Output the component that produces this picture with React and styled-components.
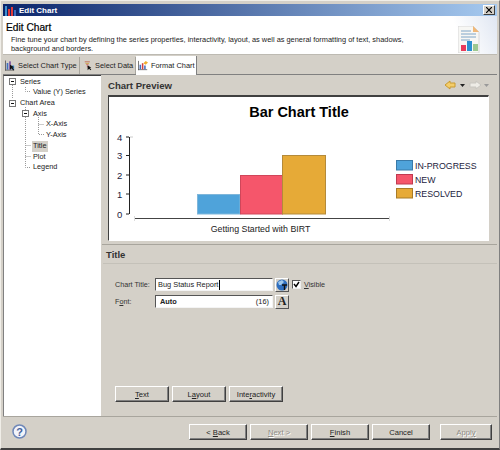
import React from "react";
import styled, { createGlobalStyle } from "styled-components";

const GlobalStyle = createGlobalStyle`
  html, body { margin: 0; padding: 0; background: #d4d0c8; }
  body { font-family: "Liberation Sans", Arial, sans-serif; font-size: 8px; color: #222; }
`;

const Win = styled.div`
  width: 500px;
  height: 450px;
  box-sizing: border-box;
  background: #d4d0c8;
  border-bottom: 2px solid #404040;
  border-right: 1px solid #808080;
  border-top: 1px solid #f0eee8;
  border-left: 1px solid #f0eee8;
  padding: 3px 2px 1px 2px;
  display: flex;
  flex-direction: column;
  overflow: hidden;
`;

const TitleBar = styled.div`
  height: 12px;
  flex: none;
  display: flex;
  align-items: center;
  gap: 3px;
  padding: 0 2px 0 2px;
  color: #fff;
  font-size: 8px;
  font-weight: bold;
  background: linear-gradient(90deg, #0a246a, #a6caf0);
  svg { flex: none; }
`;

const CloseBox = styled.div`
  margin-left: auto;
  width: 12px;
  height: 10px;
  background: #d4d0c8;
  border: 1px solid;
  border-color: #fff #404040 #404040 #fff;
  box-sizing: border-box;
  display: flex;
  align-items: center;
  justify-content: center;
`;

const Banner = styled.div`
  height: 39px;
  flex: none;
  box-sizing: border-box;
  position: relative;
  padding: 5px 3px 0;
  background: linear-gradient(245deg, #dfe6f2 0, #fff 42px);
  border-bottom: 1px solid #bdbab2;
  background-color: #fff;
`;

const BannerTitle = styled.div`
  font-size: 10.2px;
  line-height: 14px;
  color: #000;
  -webkit-text-stroke: 0.2px #000;
`;

const BannerText = styled.div`
  font-size: 7.4px;
  line-height: 9px;
  padding-left: 5px;
  color: #222;
  white-space: nowrap;
`;

const BannerIcon = styled.svg`
  position: absolute;
  right: 17px;
  top: 10px;
`;

const TabBar = styled.div`
  height: 19px;
  flex: none;
  display: flex;
  align-items: flex-end;
  box-sizing: border-box;
  border-bottom: 1px solid #808080;
  margin-top: 1px;
`;

const Tab = styled.div`
  height: ${(p) => (p.$active ? 19 : 17)}px;
  width: ${(p) => p.$w}px;
  flex: none;
  box-sizing: border-box;
  display: flex;
  align-items: center;
  gap: 3px;
  padding-left: ${(p) => p.$pad}px;
  font-size: 7.4px;
  white-space: nowrap;
  background: ${(p) => (p.$active ? "#fff" : "transparent")};
  border-right: 1px solid ${(p) => (p.$active ? "#808080" : "#a8a59d")};
  margin-bottom: ${(p) => (p.$active ? "-1px" : "0")};
  position: relative;
  svg { flex: none; }
`;

const Body = styled.div`
  flex: 1;
  min-height: 0;
  display: flex;
`;

const TreePanel = styled.div`
  width: 98px;
  flex: none;
  position: relative;
  box-sizing: border-box;
  background: #fff;
  border-top: 1px solid #404040;
  border-left: 1px solid #808080;
  padding-top: 0.5px;
`;

const TreeGuides = styled.svg`
  position: absolute;
  left: 0;
  top: 0;
`;

const TreeRow = styled.div`
  height: 10.72px;
  line-height: 10.72px;
  font-size: 7.3px;
  padding-left: ${(p) => 15 + p.$level * 13}px;
  position: relative;
  white-space: nowrap;
`;

const TreeLabel = styled.span`
  background: ${(p) => (p.$selected ? "#d4d0c8" : "transparent")};
  padding: 0 1px;
  display: inline-block;
`;

const Main = styled.div`
  flex: 1;
  min-width: 0;
  display: flex;
  flex-direction: column;
`;

const PreviewHead = styled.div`
  height: 20px;
  flex: none;
  display: flex;
  align-items: center;
  padding: 0 8px 0 7px;
  box-sizing: border-box;
  font-size: 9.6px;
  font-weight: bold;
  color: #333;
`;

const NavIcons = styled.svg`
  margin-left: auto;
`;

const ChartBox = styled.div`
  height: 146px;
  flex: none;
  margin: 0 8px 0 7px;
  box-sizing: border-box;
  background: #fff;
  border: 1px solid;
  border-color: #404040 #fff #fff #404040;
  border-top-width: 2px;
`;

const ChartSvg = styled.svg`
  display: block;
`;

const Sash = styled.div`
  height: 3px;
  flex: none;
  margin-left: 1px;
  border-bottom: 1px solid #a8a59d;
`;

const SectionHead = styled.div`
  height: 19px;
  flex: none;
  box-sizing: border-box;
  padding: 4px 0 0 3px;
  margin-left: 2px;
  font-size: 9.5px;
  font-weight: bold;
  color: #333;
  border-bottom: 1px solid #c4c1b9;
`;

const Form = styled.div`
  padding: 14px 0 0 14px;
  display: grid;
  grid-template-columns: 40px 118px 15px auto;
  grid-auto-rows: 13px;
  row-gap: 4px;
  align-items: center;
  font-size: 7.2px;
`;

const FieldLabel = styled.div`
  color: #333;
  white-space: nowrap;
`;

const Field = styled.div`
  height: 13px;
  box-sizing: border-box;
  background: #fff;
  border: 1px solid;
  border-color: #555 #f4f4f4 #f4f4f4 #555;
  padding: 0 3px 0 2px;
  display: flex;
  align-items: center;
  justify-content: space-between;
  font-size: 7.4px;
  white-space: nowrap;
`;

const Caret = styled.span`
  display: inline-block;
  width: 1px;
  height: 10px;
  background: #000;
  margin-left: 1px;
`;

const FieldText = styled.span`
  font-weight: ${(p) => (p.$bold ? "bold" : "normal")};
  padding-left: ${(p) => (p.$bold ? 2 : 0)}px;
  display: flex;
  align-items: center;
`;

const IconButton = styled.div`
  width: 14px;
  height: 14px;
  margin-left: 2px;
  box-sizing: border-box;
  background: #d4d0c8;
  border: 1px solid;
  border-color: #fff #555 #555 #fff;
  display: flex;
  align-items: center;
  justify-content: center;
  font-family: "Liberation Serif", serif;
  font-weight: bold;
  font-size: 12px;
`;

const CheckRow = styled.div`
  display: flex;
  align-items: center;
  gap: 3px;
  padding-left: 4px;
  color: #333;
`;

const CheckBox = styled.span`
  width: 9px;
  height: 9px;
  box-sizing: border-box;
  background: #fff;
  border: 1px solid;
  border-color: #555 #eee #eee #555;
  display: inline-flex;
`;

const Spacer = styled.div`
  flex: 1;
`;

const ActionRow = styled.div`
  display: flex;
  gap: 3px;
  padding-left: 14px;
  margin-bottom: 14px;
`;

const Button = styled.div`
  width: ${(p) => p.$w}px;
  height: 16px;
  margin-left: ${(p) => p.$gap || 0}px;
  flex: none;
  box-sizing: border-box;
  background: #d4d0c8;
  border: 1px solid;
  border-color: #fff #404040 #404040 #fff;
  box-shadow: inset -1px -1px 0 #808080;
  display: flex;
  align-items: center;
  justify-content: center;
  font-size: 7.6px;
  color: ${(p) => (p.$off ? "#8f8c85" : "#222")};
  text-shadow: ${(p) => (p.$off ? "1px 1px 0 #fff" : "none")};
  white-space: pre;
`;

const Footer = styled.div`
  height: 31px;
  flex: none;
  box-sizing: border-box;
  border-top: 1px solid #a8a59d;
  padding: 7px 6px 0 9px;
  display: flex;
  align-items: flex-start;
  gap: 3px;
`;

const Help = styled.svg`
  margin-right: 159px;
  flex: none;
`;

const treeItems = [
  { label: "Series", level: 0 },
  { label: "Value (Y) Series", level: 1 },
  { label: "Chart Area", level: 0 },
  { label: "Axis", level: 1 },
  { label: "X-Axis", level: 2 },
  { label: "Y-Axis", level: 2 },
  { label: "Title", level: 1, selected: true },
  { label: "Plot", level: 1 },
  { label: "Legend", level: 1 },
];

const ChartIcon = () => (
  <svg width="11" height="11" viewBox="0 0 11 11">
    <rect x="0" y="1" width="2" height="10" fill="#3f8fd0" />
    <rect x="3" y="4" width="2" height="7" fill="#e23a3a" />
    <rect x="6" y="2" width="2" height="9" fill="#e23a3a" />
    <rect x="9" y="5" width="2" height="6" fill="#3f6fc0" />
  </svg>
);

const TypeIcon = () => (
  <svg width="10" height="11" viewBox="0 0 12 12">
    <rect x="0" y="0" width="1" height="12" fill="#555" />
    <rect x="0" y="11" width="11" height="1" fill="#555" />
    <rect x="2" y="3" width="2" height="8" fill="#3f6fc0" />
    <rect x="5" y="1" width="2" height="10" fill="#7a4fa0" />
    <rect x="8" y="6" width="3" height="5" fill="#3f8fd0" />
    <path d="M6 5 L6 11 L8 9.5 L10 12 L11 11 L9 8.5 L11 8 Z" fill="#111" />
  </svg>
);

const DataIcon = () => (
  <svg width="8" height="11" viewBox="0 0 11 13">
    <rect x="1" y="1" width="7" height="1" fill="#c05030" />
    <rect x="2" y="3" width="5" height="1" fill="#c8a030" />
    <rect x="3" y="5" width="3" height="1" fill="#d04040" />
    <rect x="4" y="7" width="1" height="2" fill="#d04040" />
    <path d="M5 6 L5 13 L7 11 L9 13 L10 12 L8 10 L10 9.5 Z" fill="#111" />
  </svg>
);

const FormatIcon = () => (
  <svg width="10" height="11" viewBox="0 0 13 12">
    <rect x="0" y="0" width="1" height="12" fill="#555" />
    <rect x="0" y="11" width="12" height="1" fill="#555" />
    <rect x="2" y="5" width="2" height="6" fill="#3f6fc0" />
    <rect x="5" y="3" width="2" height="8" fill="#d04040" />
    <rect x="8" y="6" width="2" height="5" fill="#3f6fc0" />
    <path d="M7 3 L10 0 L13 2 L10 5 Z" fill="#f0b030" />
  </svg>
);

const TreeBox = ({ x, y }) => (
  <g>
    <rect x={x + 0.5} y={y + 0.5} width="6" height="6" fill="#fff" stroke="#777" />
    <path d={`M${x + 2} ${y + 3.5} H${x + 5}`} stroke="#111" />
  </g>
);

const TreeDrawing = () => (
  <TreeGuides width="60" height="110">
    <g stroke="#999" strokeDasharray="1 1" fill="none">
      <path d="M8.5 9 V23" />
      <path d="M21.5 11 V15.5 H27" />
      <path d="M21.5 31 V91.5 H27" />
      <path d="M21.5 69.5 H27 M21.5 80.5 H27" />
      <path d="M34.5 41 V58.5 H40 M34.5 48.5 H40" />
    </g>
    <TreeBox x={5} y={2} />
    <TreeBox x={5} y={24} />
    <TreeBox x={18} y={34} />
  </TreeGuides>
);

const Chart = () => (
  <ChartSvg width="379" height="143" viewBox="109 97 379 143">
    <text x="299" y="117" textAnchor="middle" fontSize="14.5" fontWeight="bold" fill="#000" fontFamily="Liberation Sans">
      Bar Chart Title
    </text>
    <g fontSize="9.5" fill="#1c1c40" fontFamily="Liberation Sans">
      <text x="117" y="141">4</text>
      <text x="117" y="159">3</text>
      <text x="117" y="179">2</text>
      <text x="117" y="198">1</text>
      <text x="117" y="218">0</text>
    </g>
    <path d="M129.5 137 V214 M126 137 H129 M126 155.5 H129 M126 175 H129 M126 194 H129 M126 214 H129" stroke="#222" fill="none" />
    <path d="M130 137 H133" stroke="#ccc" />
    <rect x="197.5" y="194.5" width="42.5" height="19.5" fill="#4fa3da" stroke="#7fb6da" />
    <rect x="240.5" y="175.5" width="42" height="38.5" fill="#f5566b" stroke="#d0465a" />
    <rect x="282.5" y="155.5" width="43" height="58.5" fill="#e6aa37" stroke="#b48a3a" />
    <path d="M134 218.5 H389" stroke="#444" />
    <path d="M134.5 216 V221 M389.5 216 V221" stroke="#ddd" />
    <text x="260.5" y="232" textAnchor="middle" fontSize="8.8" fill="#222" fontFamily="Liberation Sans">
      Getting Started with BIRT
    </text>
    <rect x="396.5" y="160.5" width="16" height="9.5" fill="#4fa3da" stroke="#3a7aa8" />
    <rect x="396.5" y="174.5" width="16" height="9.5" fill="#f5566b" stroke="#c03a50" />
    <rect x="396.5" y="188.5" width="16" height="9.5" fill="#e6aa37" stroke="#a87c28" />
    <g fontSize="8.8" fill="#1c1c40" fontFamily="Liberation Sans">
      <text x="415" y="169">IN-PROGRESS</text>
      <text x="415" y="183">NEW</text>
      <text x="415" y="197">RESOLVED</text>
    </g>
  </ChartSvg>
);

export default function App() {
  return (
    <>
      <GlobalStyle />
      <Win>
        <TitleBar>
          <ChartIcon />
          Edit Chart
          <CloseBox>
            <svg width="6" height="6" viewBox="0 0 6 6">
              <path d="M0 0 L6 6 M6 0 L0 6" stroke="#000" strokeWidth="1.2" />
            </svg>
          </CloseBox>
        </TitleBar>
        <Banner>
          <BannerTitle>Edit Chart</BannerTitle>
          <BannerText>
            Fine tune your chart by defining the series properties, interactivity, layout, as well as general formatting of text, shadows,
            <br />
            background and borders.
          </BannerText>
          <BannerIcon width="22" height="27" viewBox="0 0 22 27">
            <path d="M0 0 H15 L21 6 V27 H0 Z" fill="#f7f7f4" stroke="#d8d8d8" />
            <path d="M15 0 L21 6 H15 Z" fill="#f0b878" />
            <path d="M3 5 H13 M3 8 H18 M3 11 H18 M3 14 H12" stroke="#7ea6c8" />
            <rect x="3" y="19" width="5" height="6" fill="#e83a5a" />
            <rect x="9" y="15" width="5" height="10" fill="#2a90d0" />
            <rect x="15" y="18" width="5" height="7" fill="#9cc890" />
          </BannerIcon>
        </Banner>
        <TabBar>
          <Tab $w={77} $pad={2}><TypeIcon />Select Chart Type</Tab>
          <Tab $w={56} $pad={4}><DataIcon />Select Data</Tab>
          <Tab $w={61} $pad={2} $active><FormatIcon />Format Chart</Tab>
        </TabBar>
        <Body>
          <TreePanel>
            <TreeDrawing />
            {treeItems.map((item) => (
              <TreeRow key={item.label} $level={item.level}>
                <TreeLabel $selected={item.selected}>{item.label}</TreeLabel>
              </TreeRow>
            ))}
          </TreePanel>
          <Main>
            <PreviewHead>
              Chart Preview
              <NavIcons width="44" height="10" viewBox="0 0 44 10">
                <path d="M0 5 L5 1 V3 H10 V7 H5 V9 Z" fill="#f4cd6a" stroke="#c89a30" />
                <path d="M15 4 H20 L17.5 7 Z" fill="#222" />
                <path d="M36 5 L31 1 V3 H25 V7 H31 V9 Z" fill="#eeece6" stroke="#c8c6c0" />
                <path d="M39 4 H44 L41.5 7 Z" fill="#999" />
              </NavIcons>
            </PreviewHead>
            <ChartBox>
              <Chart />
            </ChartBox>
            <Sash />
            <SectionHead>Title</SectionHead>
            <Form>
              <FieldLabel>Chart Title:</FieldLabel>
              <Field>
                <FieldText>Bug Status Report<Caret /></FieldText>
              </Field>
              <IconButton>
                <svg width="12" height="12" viewBox="0 0 12 12">
                  <circle cx="6" cy="6" r="5.5" fill="#2f6fc0" />
                  <path d="M2 3 L6 1 L8 3 L5 6 L3 6 Z" fill="#9fc8ec" />
                  <path d="M6 6 H11 M8.5 6 V11" stroke="#111" strokeWidth="1.4" />
                </svg>
              </IconButton>
              <CheckRow>
                <CheckBox>
                  <svg width="7" height="7" viewBox="0 0 7 7">
                    <path d="M1 3 L3 5.5 L6 1" stroke="#000" strokeWidth="1.4" fill="none" />
                  </svg>
                </CheckBox>
                <span><u>V</u>isible</span>
              </CheckRow>
              <FieldLabel>F<u>o</u>nt:</FieldLabel>
              <Field>
                <FieldText $bold>Auto</FieldText>
                <span>(16)</span>
              </Field>
              <IconButton>A</IconButton>
            </Form>
            <Spacer />
            <ActionRow>
              <Button $w={54}><span><u>T</u>ext</span></Button>
              <Button $w={54}><span>L<u>a</u>yout</span></Button>
              <Button $w={54}><span>Inte<u>r</u>activity</span></Button>
            </ActionRow>
          </Main>
        </Body>
        <Footer>
          <Help width="15" height="15" viewBox="0 0 15 15">
            <circle cx="7.5" cy="7.5" r="6.5" fill="#f2f4fa" stroke="#6f88b8" strokeWidth="1.5" />
            <text x="7.5" y="11.5" textAnchor="middle" fontSize="11" fontWeight="bold" fill="#44619c" fontFamily="Liberation Sans">?</text>
          </Help>
          <Button $w={58}><span>&lt; <u>B</u>ack</span></Button>
          <Button $w={58} $off><span><u>N</u>ext &gt;</span></Button>
          <Button $w={58}><span><u>F</u>inish</span></Button>
          <Button $w={58}>Cancel</Button>
          <Button $w={52} $gap={7} $off><span>Appl<u>y</u></span></Button>
        </Footer>
      </Win>
    </>
  );
}
